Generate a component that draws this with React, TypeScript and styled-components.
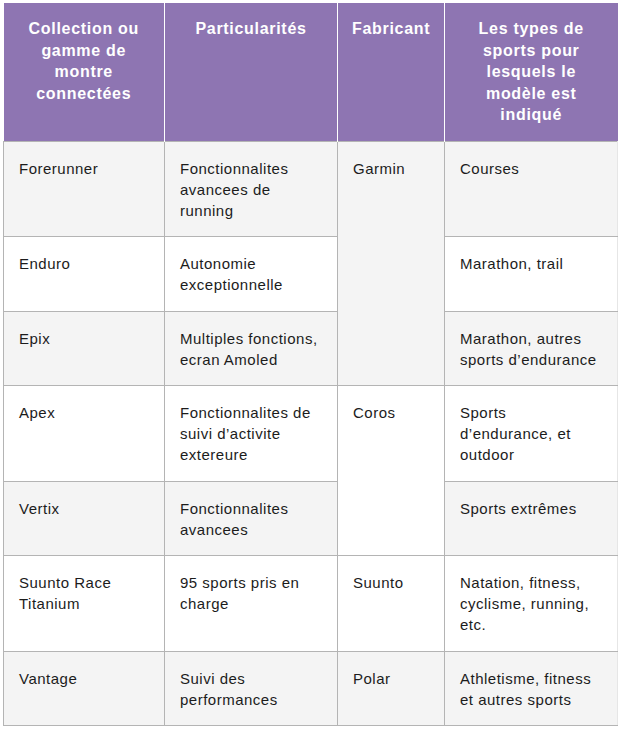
import styled, { createGlobalStyle } from 'styled-components';

const GlobalStyle = createGlobalStyle`
    html, body {
        margin: 0;
        padding: 0;
        background: #ffffff;
    }
`;

const Page = styled.div`
    padding: 3px 4px 3px 3px;
`;

const Table = styled.table`
    width: 614px;
    border-collapse: collapse;
    table-layout: fixed;
    font-family: "Liberation Sans", Arial, sans-serif;
    font-size: 15px;
    line-height: 21px;
    letter-spacing: 0.5px;
    color: #1c1c1c;
`;

const HeadCell = styled.th`
    background: #8e75b2;
    color: #ffffff;
    font-size: 16px;
    font-weight: 700;
    line-height: 21.5px;
    letter-spacing: 0.7px;
    text-align: center;
    vertical-align: top;
    padding: 15px 14px 15px;
    border-left: 1px solid #ffffff;
    border-right: 1px solid #ffffff;

    &:first-child { border-left: none; }
    &:last-child { border-right: none; }
`;

const Row = styled.tr<{ $shaded?: boolean }>`
    background: ${p => (p.$shaded ? '#f4f4f4' : '#ffffff')};
`;

const Cell = styled.td`
    vertical-align: top;
    padding: 16px 15px 15.5px;
    border: 1px solid #b4b4b4;

    &:last-child { border-right-color: #e6e6e6; }
`;

type Item = {
    name: string;
    feature: string;
    maker?: string;
    span?: number;
    sports: string;
};

const items: Item[] = [
    { name: 'Forerunner', feature: 'Fonctionnalites avancees de running', maker: 'Garmin', span: 3, sports: 'Courses' },
    { name: 'Enduro', feature: 'Autonomie exceptionnelle', sports: 'Marathon, trail' },
    { name: 'Epix', feature: 'Multiples fonctions, ecran Amoled', sports: 'Marathon, autres sports d’endurance' },
    { name: 'Apex', feature: 'Fonctionnalites de suivi d’activite extereure', maker: 'Coros', span: 2, sports: 'Sports d’endurance, et outdoor' },
    { name: 'Vertix', feature: 'Fonctionnalites avancees', sports: 'Sports extrêmes' },
    { name: 'Suunto Race Titanium', feature: '95 sports pris en charge', maker: 'Suunto', sports: 'Natation, fitness, cyclisme, running, etc.' },
    { name: 'Vantage', feature: 'Suivi des performances', maker: 'Polar', sports: 'Athletisme, fitness et autres sports' },
];

const App = () => (
    <Page>
        <GlobalStyle />
        <Table>
            <colgroup>
                <col style={{ width: 161 }} />
                <col style={{ width: 173 }} />
                <col style={{ width: 107 }} />
                <col style={{ width: 173 }} />
            </colgroup>
            <thead>
                <tr>
                    <HeadCell>Collection ou gamme de montre connectées</HeadCell>
                    <HeadCell>Particularités</HeadCell>
                    <HeadCell>Fabricant</HeadCell>
                    <HeadCell>Les types de sports pour lesquels le modèle est indiqué</HeadCell>
                </tr>
            </thead>
            <tbody>
                {items.map((it, i) => (
                    <Row key={it.name} $shaded={i % 2 === 0}>
                        <Cell>{it.name}</Cell>
                        <Cell>{it.feature}</Cell>
                        {it.maker && <Cell rowSpan={it.span ?? 1}>{it.maker}</Cell>}
                        <Cell>{it.sports}</Cell>
                    </Row>
                ))}
            </tbody>
        </Table>
    </Page>
);

export default App;
